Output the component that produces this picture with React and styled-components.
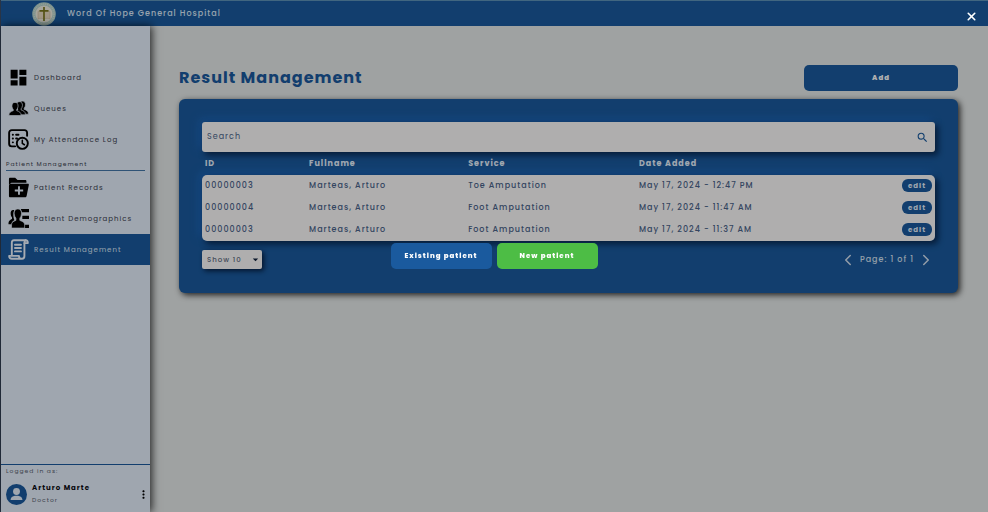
import React from "react";
import styled, { createGlobalStyle, css } from "styled-components";
import { MdDashboard, MdSearch, MdMoreVert, MdArrowDropDown } from "react-icons/md";
import { ChevronLeft, ChevronRight, X } from "lucide-react";

const blue = "#1a5a9e";
const ink = "#4b648a";

const GlobalStyle = createGlobalStyle`
  *, *::before, *::after { box-sizing: border-box; }
  body {
    margin: 0;
    font-family: Poppins, Inter, sans-serif;
    font-size: 8px;
    letter-spacing: 1px;
    background: #e4e8e8;
  }
  button, input, select { font: inherit; letter-spacing: inherit; }
  svg { display: block; flex: none; }
`;

const Page = styled.div`
  min-height: 100vh;
  display: flex;
  flex-direction: column;
  border-left: 1px solid #3c4c66;
`;

const Header = styled.header`
  height: 26px;
  display: flex;
  align-items: center;
  gap: 11px;
  padding-left: 31px;
  background: ${blue};
  border-top: 1px solid #5d93b8;
  color: #dce9f8;
  font-weight: 500;
`;

const Body = styled.div`
  flex: 1;
  display: flex;
`;

const Sidebar = styled.aside`
  flex: none;
  width: 149px;
  display: flex;
  flex-direction: column;
  background: #e4eefb;
  box-shadow: 2px 0 8px rgba(0, 0, 0, 0.75);
`;

const Nav = styled.nav`
  flex: 1;
  padding-top: 36px;
`;

const NavLink = styled.a`
  height: 31px;
  display: flex;
  align-items: center;
  gap: 5px;
  padding-left: 7px;
  font-size: 7px;
  text-decoration: none;
  color: #3c4250;
  ${(p) =>
    p.$active &&
    css`
      background: ${blue};
      color: #dce9f8;
    `}
  svg {
    width: 21px;
    height: 21px;
    color: ${(p) => (p.$active ? "#eef5ff" : "#000")};
  }
`;

const SectionLabel = styled.h2`
  margin: 0 5px 1px;
  height: 16px;
  line-height: 18px;
  border-bottom: 1px solid #4477aa;
  font-size: 6px;
  font-weight: 400;
  color: #3c4250;
`;

const Account = styled.section`
  height: 48px;
  padding: 2px 2px 0 5px;
  border-top: 1px solid ${blue};
  font-size: 6px;
  line-height: 9px;
  color: #5a6270;
`;

const AccountRow = styled.div`
  display: flex;
  align-items: center;
  gap: 5px;
  margin-top: 5px;
`;

const AccountText = styled.div`
  flex: 1;
  font-size: 6px;
  line-height: 13px;
  strong {
    display: block;
    font-size: 7px;
    font-weight: 700;
    color: #0a0a10;
  }
`;

const IconButton = styled.button`
  display: flex;
  padding: 0;
  border: 0;
  background: none;
  color: inherit;
  cursor: pointer;
`;

const KebabButton = styled(IconButton)`
  width: 9px;
  justify-content: center;
  color: #000;
`;

const Main = styled.main`
  flex: 1;
  min-width: 0;
  padding: 39px 30px 0 29px;
`;

const TitleRow = styled.div`
  display: flex;
  align-items: center;
  justify-content: space-between;
  margin-bottom: 8px;
`;

const Title = styled.h1`
  margin: 0;
  font-size: 16px;
  line-height: 24px;
  font-weight: 700;
  color: ${blue};
`;

const Button = styled.button`
  width: ${(p) => p.$width};
  height: 26px;
  padding: 0;
  border: 0;
  border-radius: 5px;
  background: ${(p) => p.$color || blue};
  color: #fff;
  font-size: 7px;
  font-weight: 800;
  cursor: pointer;
`;

const raised = css`
  box-shadow: 3px 3px 6px rgba(0, 15, 40, 0.7), -3px -3px 9px #1d66ba;
`;

const Panel = styled.section`
  padding: 23px 23px 24px;
  border-radius: 6px;
  background: ${blue};
  box-shadow: 2px 2px 6px rgba(0, 0, 0, 0.8);
`;

const SearchBox = styled.label`
  height: 30px;
  display: flex;
  align-items: center;
  padding: 0 6px 0 5px;
  border-radius: 3px;
  background: #fbfafa;
  color: ${blue};
  ${raised}
`;

const SearchInput = styled.input`
  flex: 1;
  min-width: 0;
  height: 13px;
  padding: 0;
  border: 0;
  outline: 0;
  background: none;
  color: ${ink};
  &::placeholder {
    color: ${ink};
    opacity: 1;
  }
`;

const Table = styled.table`
  width: 100%;
  table-layout: fixed;
  border-collapse: separate;
  border-spacing: 0;
  text-align: left;
`;

const TableBody = styled.tbody`
  border-radius: 5px;
  ${raised}
  tr:first-child td:first-child { border-top-left-radius: 5px; }
  tr:first-child td:last-child { border-top-right-radius: 5px; }
  tr:last-child td:first-child { border-bottom-left-radius: 5px; }
  tr:last-child td:last-child { border-bottom-right-radius: 5px; }
`;

const HeadCell = styled.th`
  width: ${(p) => p.$width};
  height: 23px;
  padding: 0 3px;
  font-weight: 700;
  color: #e6f0fc;
`;

const Cell = styled.td`
  height: 22px;
  padding: 0 3px;
  line-height: 14px;
  background: #fbfafa;
  color: ${ink};
  font-weight: 500;
  text-align: ${(p) => p.$align || "left"};
`;

const EditButton = styled.button`
  width: 30px;
  height: 13px;
  padding: 0;
  border: 0;
  border-radius: 6px;
  background: ${blue};
  color: #e6f0fc;
  font-size: 7px;
  line-height: 12px;
  font-weight: 700;
  vertical-align: middle;
  cursor: pointer;
`;

const PanelFooter = styled.div`
  display: flex;
  align-items: center;
  justify-content: space-between;
  margin-top: 9px;
`;

const SelectWrap = styled.div`
  display: grid;
  align-items: center;
  width: 60px;
  height: 19px;
  border-radius: 2px;
  background: #fbfafa;
  box-shadow: 2px 2px 5px rgba(0, 15, 40, 0.8);
  > * {
    grid-area: 1 / 1;
  }
  svg {
    justify-self: end;
    pointer-events: none;
    color: #10213c;
  }
`;

const Select = styled.select`
  width: 100%;
  height: 100%;
  padding: 0 12px 0 5px;
  border: 0;
  background: none;
  appearance: none;
  font-size: 7px;
  font-weight: 500;
  color: #5d6b80;
`;

const Pager = styled.div`
  display: flex;
  align-items: center;
  gap: 3px;
  font-weight: 500;
  color: #d5e2f2;
`;

const Overlay = styled.div`
  position: fixed;
  inset: 0;
  display: flex;
  align-items: center;
  justify-content: center;
  gap: 5px;
  background: rgba(0, 0, 0, 0.3);
`;

const CloseButton = styled(IconButton)`
  position: absolute;
  top: 10px;
  right: 10px;
  color: #fff;
`;

function Emblem() {
  return (
    <svg width="24" height="24" viewBox="0 0 24 24" aria-hidden="true">
      <circle cx="12" cy="12" r="11.800" fill="#b4d2cb" />
      <circle cx="12" cy="12" r="10" fill="none" stroke="#d6e2d6" strokeWidth="1.500" strokeDasharray="1 1" />
      <circle cx="12" cy="12" r="8.600" fill="#efecdf" />
      <path d="M6 9.500c2-1.200 4-1 6 0 2-1 4-1.200 6 0V17c-2-1-4-1-6 0-2-1-4-1-6 0z" fill="#e6d8c0" stroke="#cdbb9c" strokeWidth=".6" />
      <path d="M12 5v14M7.500 8.800h9" stroke="#79761f" strokeWidth="1.700" fill="none" />
    </svg>
  );
}

function PeopleIcon() {
  const person =
    "M8 4c2.500 0 3.700 2 3.500 4.500-.1 1.600-.7 2.800-1.500 3.600v1.400c2.500.9 5 1.600 5 5.500H1c0-3.900 2.500-4.600 5-5.500v-1.400C5.200 11.300 4.600 10.100 4.500 8.500 4.300 6 5.500 4 8 4z";
  return (
    <svg viewBox="0 0 24 22" fill="currentColor" stroke="#e4eefb" strokeWidth=".8" aria-hidden="true">
      <path d={person} transform="translate(8.500 -1.500)" />
      <path d={person} transform="translate(5 -.8)" />
      <path d={person} />
    </svg>
  );
}

function AttendanceIcon() {
  return (
    <svg viewBox="0 0 22 22" fill="none" stroke="currentColor" strokeWidth="2" strokeLinecap="round" aria-hidden="true">
      <path d="M20 7V4c0-1.700-1-2.800-2.700-2.800H4C2.300 1.200 1.200 2.300 1.200 4v11.500c0 1.700 1 2.700 2.800 2.700h3.500" />
      <path d="M5 6h.2M5 10h.2M5 14h.2M8.500 6H11M8.500 10h1" />
      <circle cx="15" cy="15" r="5.800" />
      <path d="M15 11.800V15l2.200 1.500" strokeWidth="1.600" />
    </svg>
  );
}

function RecordsIcon() {
  return (
    <svg viewBox="0 0 22 22" aria-hidden="true">
      <path d="M1 8V2c0-.8.500-1.300 1.300-1.300h5.200L10 3.200h8c.8 0 1.300.5 1.300 1.300V6H3.500z" fill="currentColor" />
      <path d="M3.300 7.200h17.500c.8 0 1.200.5 1 1.300l-2.300 11.400c-.2.900-.8 1.400-1.600 1.400H2.300C1.500 21.300 1 20.800 1 20V9.200c0-1.300.9-2 2.300-2z" fill="currentColor" />
      <path d="M11.500 9.800v8.800M7.100 14.200h8.800" stroke="#e4eefb" strokeWidth="2" />
    </svg>
  );
}

function DemographicsIcon() {
  return (
    <svg viewBox="0 0 22 22" fill="currentColor" aria-hidden="true">
      <path d="M13.500 1H22v3.500h-7.500zM15 8h7v3.500h-7zM16.500 17.500H22V21h-5.500z" />
      <path d="M5.500 2C3.200 2 2.600 4 2.800 6.300c.1 1.600.7 2.700 1.400 3.500v1.600C2 12.500.5 13 .5 17h3.200c.3-2.500 1.500-3.500 3-4.200C5.500 10.500 5 6 6.500 2.200z" />
      <path d="M10.300 1c2.900 0 4 2.300 3.800 5-.1 2-.7 3.600-1.700 4.700V13c2.600 1.100 5 1.600 5 4.500V21H3.700v-3.500c0-2.900 2.100-3.400 4.600-4.500v-2.300C7.300 9.600 6.600 8 6.500 6c-.2-2.700.9-5 3.800-5z" stroke="#e4eefb" strokeWidth=".7" />
    </svg>
  );
}

function ScrollIcon() {
  return (
    <svg viewBox="0 0 22 22" fill="none" stroke="currentColor" strokeWidth="2" strokeLinejoin="round" strokeLinecap="round" aria-hidden="true">
      <path d="M4 16.500V4c0-1.700.8-2.700 2.300-2.700h12.200c1.500 0 2.300 1 2.300 3h-3.600v13.500c0 1.800-.9 2.900-2.500 2.900H4c-1.700 0-2.800-1.100-2.800-3h10.300c0 1.900 1 3 2.700 3" />
      <path d="M17.200 4.300c0-1.700.3-2.600 1.300-3M7.300 6h6.300M7.300 9.500h6.300M7.300 13h6.300" />
    </svg>
  );
}

function Avatar() {
  return (
    <svg width="21" height="21" viewBox="0 0 22 22" aria-hidden="true">
      <circle cx="11" cy="11" r="11" fill={blue} />
      <circle cx="11" cy="7.800" r="3.600" fill="#e4eefb" />
      <path d="M4.800 16.800c0-3 2.200-4.600 6.200-4.600s6.200 1.600 6.200 4.600z" fill="#e4eefb" />
    </svg>
  );
}

const rows = [
  ["00000003", "Marteas, Arturo", "Toe Amputation", "May 17, 2024 - 12:47 PM"],
  ["00000004", "Marteas, Arturo", "Foot Amputation", "May 17, 2024 - 11:47 AM"],
  ["00000003", "Marteas, Arturo", "Foot Amputation", "May 17, 2024 - 11:37 AM"],
];

export default function App() {
  return (
    <>
      <GlobalStyle />
      <Page>
        <Header>
          <Emblem />
          <span>Word Of Hope General Hospital</span>
        </Header>
        <Body>
          <Sidebar>
            <Nav>
              <NavLink href="#dashboard"><MdDashboard />Dashboard</NavLink>
              <NavLink href="#queues"><PeopleIcon />Queues</NavLink>
              <NavLink href="#attendance"><AttendanceIcon />My Attendance Log</NavLink>
              <SectionLabel>Patient Management</SectionLabel>
              <NavLink href="#records"><RecordsIcon />Patient Records</NavLink>
              <NavLink href="#demographics"><DemographicsIcon />Patient Demographics</NavLink>
              <NavLink href="#results" $active aria-current="page"><ScrollIcon />Result Management</NavLink>
            </Nav>
            <Account>
              Logged in as:
              <AccountRow>
                <Avatar />
                <AccountText>
                  <strong>Arturo Marte</strong>
                  Doctor
                </AccountText>
                <KebabButton aria-label="Account options"><MdMoreVert size={13} /></KebabButton>
              </AccountRow>
            </Account>
          </Sidebar>
          <Main>
            <TitleRow>
              <Title>Result Management</Title>
              <Button $width="154px">Add</Button>
            </TitleRow>
            <Panel>
              <SearchBox>
                <SearchInput type="text" placeholder="Search" aria-label="Search" />
                <MdSearch size={13} />
              </SearchBox>
              <Table>
                <thead>
                  <tr>
                    <HeadCell $width="14.2%">ID</HeadCell>
                    <HeadCell $width="21.7%">Fullname</HeadCell>
                    <HeadCell $width="23.3%">Service</HeadCell>
                    <HeadCell>Date Added</HeadCell>
                    <HeadCell $width="40px" aria-label="Actions" />
                  </tr>
                </thead>
                <TableBody>
                  {rows.map((row, i) => (
                    <tr key={i}>
                      {row.map((value) => (
                        <Cell key={value}>{value}</Cell>
                      ))}
                      <Cell $align="right"><EditButton>edit</EditButton></Cell>
                    </tr>
                  ))}
                </TableBody>
              </Table>
              <PanelFooter>
                <SelectWrap>
                  <Select aria-label="Rows per page" defaultValue="10">
                    <option value="10">Show 10</option>
                    <option value="20">Show 20</option>
                    <option value="50">Show 50</option>
                  </Select>
                  <MdArrowDropDown size={13} />
                </SelectWrap>
                <Pager>
                  <IconButton aria-label="Previous page"><ChevronLeft size={18} strokeWidth={2} /></IconButton>
                  <span>Page: 1 of 1</span>
                  <IconButton aria-label="Next page"><ChevronRight size={18} strokeWidth={2} /></IconButton>
                </Pager>
              </PanelFooter>
            </Panel>
          </Main>
        </Body>
      </Page>
      <Overlay role="dialog" aria-modal="true" aria-label="Choose patient type">
        <Button $width="101px">Existing patient</Button>
        <Button $width="101px" $color="#4dbd45">New patient</Button>
        <CloseButton aria-label="Close"><X size={13} strokeWidth={3} /></CloseButton>
      </Overlay>
    </>
  );
}
